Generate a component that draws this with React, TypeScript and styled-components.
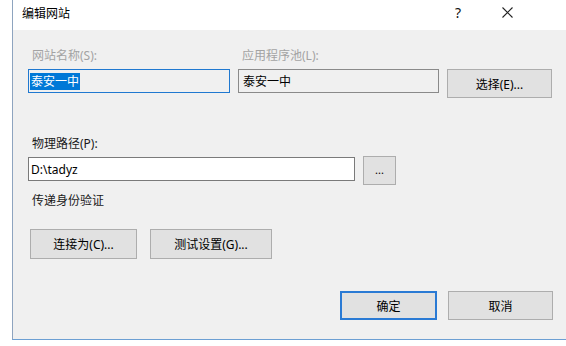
import React from "react";
import styled, { createGlobalStyle } from "styled-components";

const Global = createGlobalStyle`
  html, body { margin: 0; padding: 0; background: #ffffff; }
  body {
    font-family: "Noto Sans", "Noto Sans CJK SC", sans-serif;
    font-size: 12px;
    color: #000;
  }
`;

const Window = styled.div`
  margin-left: 12px;
  width: 554px;
  height: 340px;
  box-sizing: border-box;
  border-left: 1px solid #8ea4bf;
  border-bottom: 1px solid #6c9fd3;
  background: #f0f0f0;
  display: flex;
  flex-direction: column;
  overflow: hidden;
`;

const TitleBar = styled.div`
  height: 30px;
  flex: 0 0 30px;
  background: #ffffff;
  display: flex;
  align-items: center;
  padding-left: 9px;
  padding-right: 36px;
`;

const Title = styled.div`
  font-family: "Noto Sans CJK SC", sans-serif;
  font-size: 12px;
  color: #000;
  flex: 1;
  line-height: 16px;
  margin-top: -5px;
`;

const TitleButton = styled.div<{ $w: number }>`
  width: ${(p) => p.$w}px;
  height: 26px;
  display: flex;
  align-items: center;
  justify-content: center;
  font-family: "Noto Sans", sans-serif;
  font-size: 14px;
  color: #111;
  margin-top: -5px;
`;

const Content = styled.div`
  flex: 1;
  display: flex;
  flex-direction: column;
  padding: 18px 13px 0 15px;
`;

const LabelRow = styled.div`
  display: grid;
  grid-template-columns: 210px 1fr;
`;

const Label = styled.div<{ $disabled?: boolean }>`
  font-family: "Noto Sans", "Noto Sans CJK SC", sans-serif;
  font-size: 12px;
  line-height: 16px;
  height: 16px;
  padding-left: 4px;
  color: ${(p) => (p.$disabled ? "#a3a3a3" : "#1a1a1a")};
  white-space: nowrap;
`;

const TopRow = styled.div`
  margin-top: 5px;
  display: grid;
  grid-template-columns: 202px 201px 105px;
  column-gap: 8px;
  align-items: start;
`;

const Field = styled.div<{ $variant: "focus" | "disabled" | "normal"; $h: number }>`
  box-sizing: border-box;
  height: ${(p) => p.$h}px;
  border: 1px solid
    ${(p) => (p.$variant === "focus" ? "#1f78d0" : p.$variant === "disabled" ? "#8a8a8a" : "#7a7a7a")};
  background: ${(p) => (p.$variant === "normal" ? "#ffffff" : "#f0f0f0")};
  display: flex;
  align-items: center;
  padding-left: ${(p) => (p.$variant === "focus" ? 1 : p.$variant === "disabled" ? 4 : 2)}px;
  font-family: "Noto Sans", "Noto Sans CJK SC", sans-serif;
  font-size: 12px;
  color: #000;
  white-space: nowrap;
  overflow: hidden;
`;

const Selected = styled.span`
  background: #0078d7;
  color: #ffffff;
  line-height: 17px;
  padding: 0 1px;
`;

const Button = styled.button<{ $w: number; $h?: number; $default?: boolean }>`
  box-sizing: border-box;
  width: ${(p) => p.$w}px;
  height: ${(p) => p.$h ?? 30}px;
  background: #e1e1e1;
  border: ${(p) => (p.$default ? "2px solid #2a7ad4" : "1px solid #adadad")};
  font-family: "Noto Sans", "Noto Sans CJK SC", sans-serif;
  font-size: 12px;
  color: #000;
  padding: 0;
  margin: 0;
  display: flex;
  align-items: center;
  justify-content: center;
`;

const PathLabel = styled(Label)`
  margin-top: 38px;
`;

const PathRow = styled.div`
  margin-top: 4px;
  display: grid;
  grid-template-columns: 327px 33px;
  column-gap: 8px;
  align-items: start;
`;

const PathField = styled(Field)`
  margin-top: 1px;
`;

const AuthLabel = styled(Label)`
  margin-top: 8px;
`;

const AuthRow = styled.div`
  margin-top: 20px;
  margin-left: 2px;
  display: flex;
  gap: 13px;
`;

const Footer = styled.div`
  margin-top: 32px;
  display: flex;
  justify-content: flex-end;
  gap: 11px;
`;

const Dots = styled.span`
  font-size: 11px;
  margin-top: -3px;
`;

export default function App() {
  return (
    <>
      <Global />
      <Window>
        <TitleBar>
          <Title>编辑网站</Title>
          <TitleButton $w={52}>?</TitleButton>
          <TitleButton $w={46}>
            <svg width="11" height="11" viewBox="0 0 11 11">
              <path d="M0.5 0.5 L10.5 10.5 M10.5 0.5 L0.5 10.5" stroke="#222" strokeWidth="1.1" fill="none" />
            </svg>
          </TitleButton>
        </TitleBar>
        <Content>
          <LabelRow>
            <Label $disabled>网站名称(S):</Label>
            <Label $disabled>应用程序池(L):</Label>
          </LabelRow>
          <TopRow>
            <Field $variant="focus" $h={24}>
              <Selected>泰安一中</Selected>
            </Field>
            <Field $variant="disabled" $h={24}>泰安一中</Field>
            <Button $w={105} $h={29}>选择(E)...</Button>
          </TopRow>
          <PathLabel>物理路径(P):</PathLabel>
          <PathRow>
            <PathField $variant="normal" $h={24}>D:\tadyz</PathField>
            <Button $w={33} $h={29}>
              <Dots>...</Dots>
            </Button>
          </PathRow>
          <AuthLabel>传递身份验证</AuthLabel>
          <AuthRow>
            <Button $w={107}>连接为(C)...</Button>
            <Button $w={122}>测试设置(G)...</Button>
          </AuthRow>
          <Footer>
            <Button $w={97} $h={29} $default>确定</Button>
            <Button $w={105} $h={29}>取消</Button>
          </Footer>
        </Content>
      </Window>
    </>
  );
}
